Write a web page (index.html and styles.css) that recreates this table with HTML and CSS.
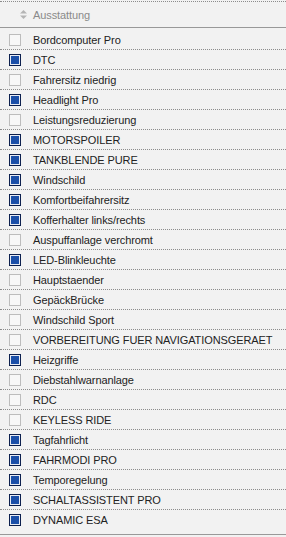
FILE: index.html
```html
<!DOCTYPE html>
<html lang="de">
<head>
    <meta charset="UTF-8">
    <meta name="viewport" content="width=device-width, initial-scale=1.0">
    <title>Ausstattung</title>
    <link rel="stylesheet" href="styles.css">
</head>
<body>
    <div class="panel">
        <div class="panel-header">
            <span class="sort-icon">
                <svg width="7" height="9" viewBox="0 0 7 9">
                    <path d="M3.5 0 L7 3.5 L0 3.5 Z" fill="#b4b4b4"/>
                    <path d="M0 5.5 L7 5.5 L3.5 9 Z" fill="#b4b4b4"/>
                </svg>
            </span>
            <span class="header-label">Ausstattung</span>
        </div>

        <ul class="option-list">
            <li class="option"><span class="check"></span>Bordcomputer Pro</li>
            <li class="option"><span class="check checked"></span>DTC</li>
            <li class="option"><span class="check"></span>Fahrersitz niedrig</li>
            <li class="option"><span class="check checked"></span>Headlight Pro</li>
            <li class="option"><span class="check"></span>Leistungsreduzierung</li>
            <li class="option"><span class="check checked"></span>MOTORSPOILER</li>
            <li class="option"><span class="check checked"></span>TANKBLENDE PURE</li>
            <li class="option"><span class="check checked"></span>Windschild</li>
            <li class="option"><span class="check checked"></span>Komfortbeifahrersitz</li>
            <li class="option"><span class="check checked"></span>Kofferhalter links/rechts</li>
            <li class="option"><span class="check"></span>Auspuffanlage verchromt</li>
            <li class="option"><span class="check checked"></span>LED-Blinkleuchte</li>
            <li class="option"><span class="check"></span>Hauptstaender</li>
            <li class="option"><span class="check"></span>GepäckBrücke</li>
            <li class="option"><span class="check"></span>Windschild Sport</li>
            <li class="option"><span class="check"></span>VORBEREITUNG FUER NAVIGATIONSGERAET</li>
            <li class="option"><span class="check checked"></span>Heizgriffe</li>
            <li class="option"><span class="check"></span>Diebstahlwarnanlage</li>
            <li class="option"><span class="check"></span>RDC</li>
            <li class="option"><span class="check"></span>KEYLESS RIDE</li>
            <li class="option"><span class="check checked"></span>Tagfahrlicht</li>
            <li class="option"><span class="check checked"></span>FAHRMODI PRO</li>
            <li class="option"><span class="check checked"></span>Temporegelung</li>
            <li class="option"><span class="check checked"></span>SCHALTASSISTENT PRO</li>
            <li class="option"><span class="check checked"></span>DYNAMIC ESA</li>
        </ul>
    </div>
</body>
</html>
```

FILE: styles.css
```css
* {
    margin: 0;
    padding: 0;
    box-sizing: border-box;
}

body {
    font-family: 'Liberation Sans', Arial, sans-serif;
    font-size: 11px;
    letter-spacing: -0.1px;
    background: #f2f2f2;
    color: #222;
}

.panel {
    padding-top: 1px;
    background: #f2f2f2;
}

.panel-header {
    display: flex;
    align-items: center;
    height: 27px;
    border-top: 1px dotted #8c8c8c;
    border-bottom: 1px solid #999;
}

.sort-icon {
    display: flex;
    width: 33px;
    padding-left: 20px;
}

.header-label {
    color: #8a8a8a;
}

.option-list {
    list-style: none;
    padding: 2px 0 4px;
    border-bottom: 1px solid #999;
}

.option {
    display: flex;
    align-items: center;
    height: 20px;
    border-bottom: 1px dotted #8c8c8c;
}

.option:last-child {
    border-bottom: none;
}

.check {
    width: 12px;
    height: 12px;
    margin: 0 12px 0 9px;
    border: 1px solid #bcbcbc;
    background: #f7f7f7;
}

.check.checked {
    border: 1px solid #0c1f4d;
    background: #1b4fa8;
    box-shadow: inset 0 0 0 1px #e8ecf4;
}
```
